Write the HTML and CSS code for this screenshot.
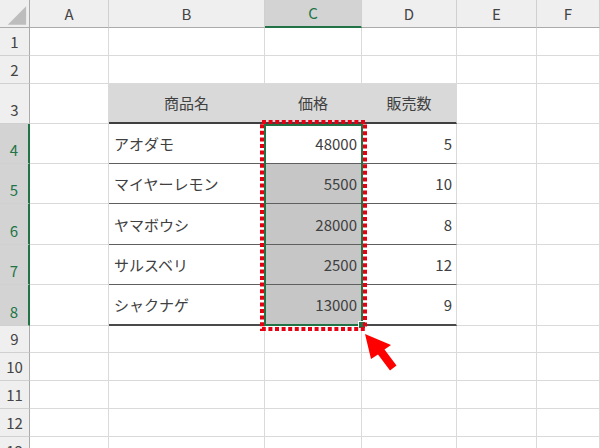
FILE: index.html
```html
<!DOCTYPE html>
<html lang="ja">
<head>
<meta charset="utf-8">
<link rel="stylesheet" href="styles.css">
</head>
<body>
<div class="sheet">
  <div class="h corner"><svg width="30" height="28" viewBox="0 0 30 28"><polygon points="27,6 27,25 8,25" fill="#bdbdbd"/></svg></div>
  <div class="h col">A</div>
  <div class="h col">B</div>
  <div class="h col selcol">C</div>
  <div class="h col">D</div>
  <div class="h col">E</div>
  <div class="h col">F</div>

  <div class="h row">1</div><div class="c"></div><div class="c"></div><div class="c"></div><div class="c"></div><div class="c"></div><div class="c"></div>
  <div class="h row">2</div><div class="c"></div><div class="c"></div><div class="c"></div><div class="c"></div><div class="c"></div><div class="c"></div>

  <div class="h row">3</div><div class="c"></div>
  <div class="c th">商品名</div><div class="c th">価格</div><div class="c th">販売数</div>
  <div class="c"></div><div class="c"></div>

  <div class="h row selrow">4</div><div class="c"></div>
  <div class="c td">アオダモ</div><div class="c td num">48000</div><div class="c td num">5</div>
  <div class="c"></div><div class="c"></div>

  <div class="h row selrow">5</div><div class="c"></div>
  <div class="c td">マイヤーレモン</div><div class="c td num hl">5500</div><div class="c td num">10</div>
  <div class="c"></div><div class="c"></div>

  <div class="h row selrow">6</div><div class="c"></div>
  <div class="c td">ヤマボウシ</div><div class="c td num hl">28000</div><div class="c td num">8</div>
  <div class="c"></div><div class="c"></div>

  <div class="h row selrow">7</div><div class="c"></div>
  <div class="c td">サルスベリ</div><div class="c td num hl">2500</div><div class="c td num">12</div>
  <div class="c"></div><div class="c"></div>

  <div class="h row selrow">8</div><div class="c"></div>
  <div class="c td last">シャクナゲ</div><div class="c td num hl last">13000</div><div class="c td num last">9</div>
  <div class="c"></div><div class="c"></div>

  <div class="h row">9</div><div class="c"></div><div class="c"></div><div class="c"></div><div class="c"></div><div class="c"></div><div class="c"></div>
  <div class="h row">10</div><div class="c"></div><div class="c"></div><div class="c"></div><div class="c"></div><div class="c"></div><div class="c"></div>
  <div class="h row">11</div><div class="c"></div><div class="c"></div><div class="c"></div><div class="c"></div><div class="c"></div><div class="c"></div>
  <div class="h row">12</div><div class="c"></div><div class="c"></div><div class="c"></div><div class="c"></div><div class="c"></div><div class="c"></div>
  <div class="h row">13</div><div class="c"></div><div class="c"></div><div class="c"></div><div class="c"></div><div class="c"></div><div class="c"></div>

  <div class="selection"><div class="handle"></div></div>
  <div class="marquee">
    <svg width="107" height="211" viewBox="0 0 107 211"><rect x="2" y="2" width="103" height="207" fill="none" stroke="#e60012" stroke-width="4" stroke-dasharray="4 2.6"/></svg>
  </div>
  <svg class="arrow" width="40" height="45" viewBox="0 0 40 45"><polygon points="5,4 31,15 24.5,19.5 36.5,35.5 30,40.5 18,24.5 11,29" fill="#ff0000"/></svg>
</div>
</body>
</html>
```
FILE: styles.css
```css
html, body {
  margin: 0;
  padding: 0;
  background: #ffffff;
  overflow: hidden;
}
.sheet {
  position: relative;
  display: grid;
  grid-template-columns: 30px 79px 156px 97px 95px 80px 63px;
  grid-template-rows: 28px 28px 28px 40px 40px 40px 41px 40px 41px 27px 28px 28px 28px 28px;
  width: 600px;
  height: 448px;
  overflow: hidden;
  font-family: "Noto Sans CJK JP", "Noto Sans", sans-serif;
  font-size: 15px;
  color: #404040;
}
.sheet > div {
  box-sizing: border-box;
}
.h {
  background: #efefef;
  color: #444;
  display: flex;
  justify-content: center;
  align-items: center;
  border-right: 1px solid #d0d0d0;
  border-bottom: 1px solid #d0d0d0;
}
.corner {
  border-bottom: 1px solid #ababab;
  border-right: 1px solid #ababab;
}
.corner svg { display: block; }
.col {
  border-bottom: 1px solid #ababab;
  padding-bottom: 1px;
}
.selcol {
  background: #d3d3d3;
  color: #217346;
  border-bottom: 2px solid #217346;
}
.row {
  border-right: 1px solid #ababab;
  align-items: flex-end;
  padding-bottom: 3px;
  line-height: 20px;
}
.selrow {
  background: #d3d3d3;
  color: #217346;
  border-right: 2px solid #217346;
}
.c {
  border-right: 1px solid #dadada;
  border-bottom: 1px solid #dadada;
  display: flex;
  align-items: center;
  padding: 0 5px;
}
.th {
  background: #d9d9d9;
  justify-content: center;
  border-bottom: 2px solid #3f3f3f;
  border-right-color: #d9d9d9;
  padding-bottom: 2px;
}
.td {
  border-bottom: 1px solid #5f5f5f;
}
.td.last {
  border-bottom: 2px solid #4a4a4a;
}
.num {
  justify-content: flex-end;
  padding-right: 4px;
}
.hl {
  background: #c6c6c6;
}
.selection {
  position: absolute;
  grid-row: 5 / 10;
  grid-column: 4 / 5;
  top: 0;
  left: -1px;
  right: -1px;
  bottom: 0;
  border: 2px solid #217346;
  pointer-events: none;
}
.handle {
  position: absolute;
  right: -5px;
  bottom: -5px;
  width: 6px;
  height: 6px;
  background: #217346;
  border: 1px solid #ffffff;
}
.marquee {
  position: absolute;
  grid-row: 5 / 10;
  grid-column: 4 / 5;
  top: -4px;
  left: -5px;
}
.marquee svg, .arrow { display: block; }
.arrow {
  position: absolute;
  left: 360px;
  top: 330px;
}
```
